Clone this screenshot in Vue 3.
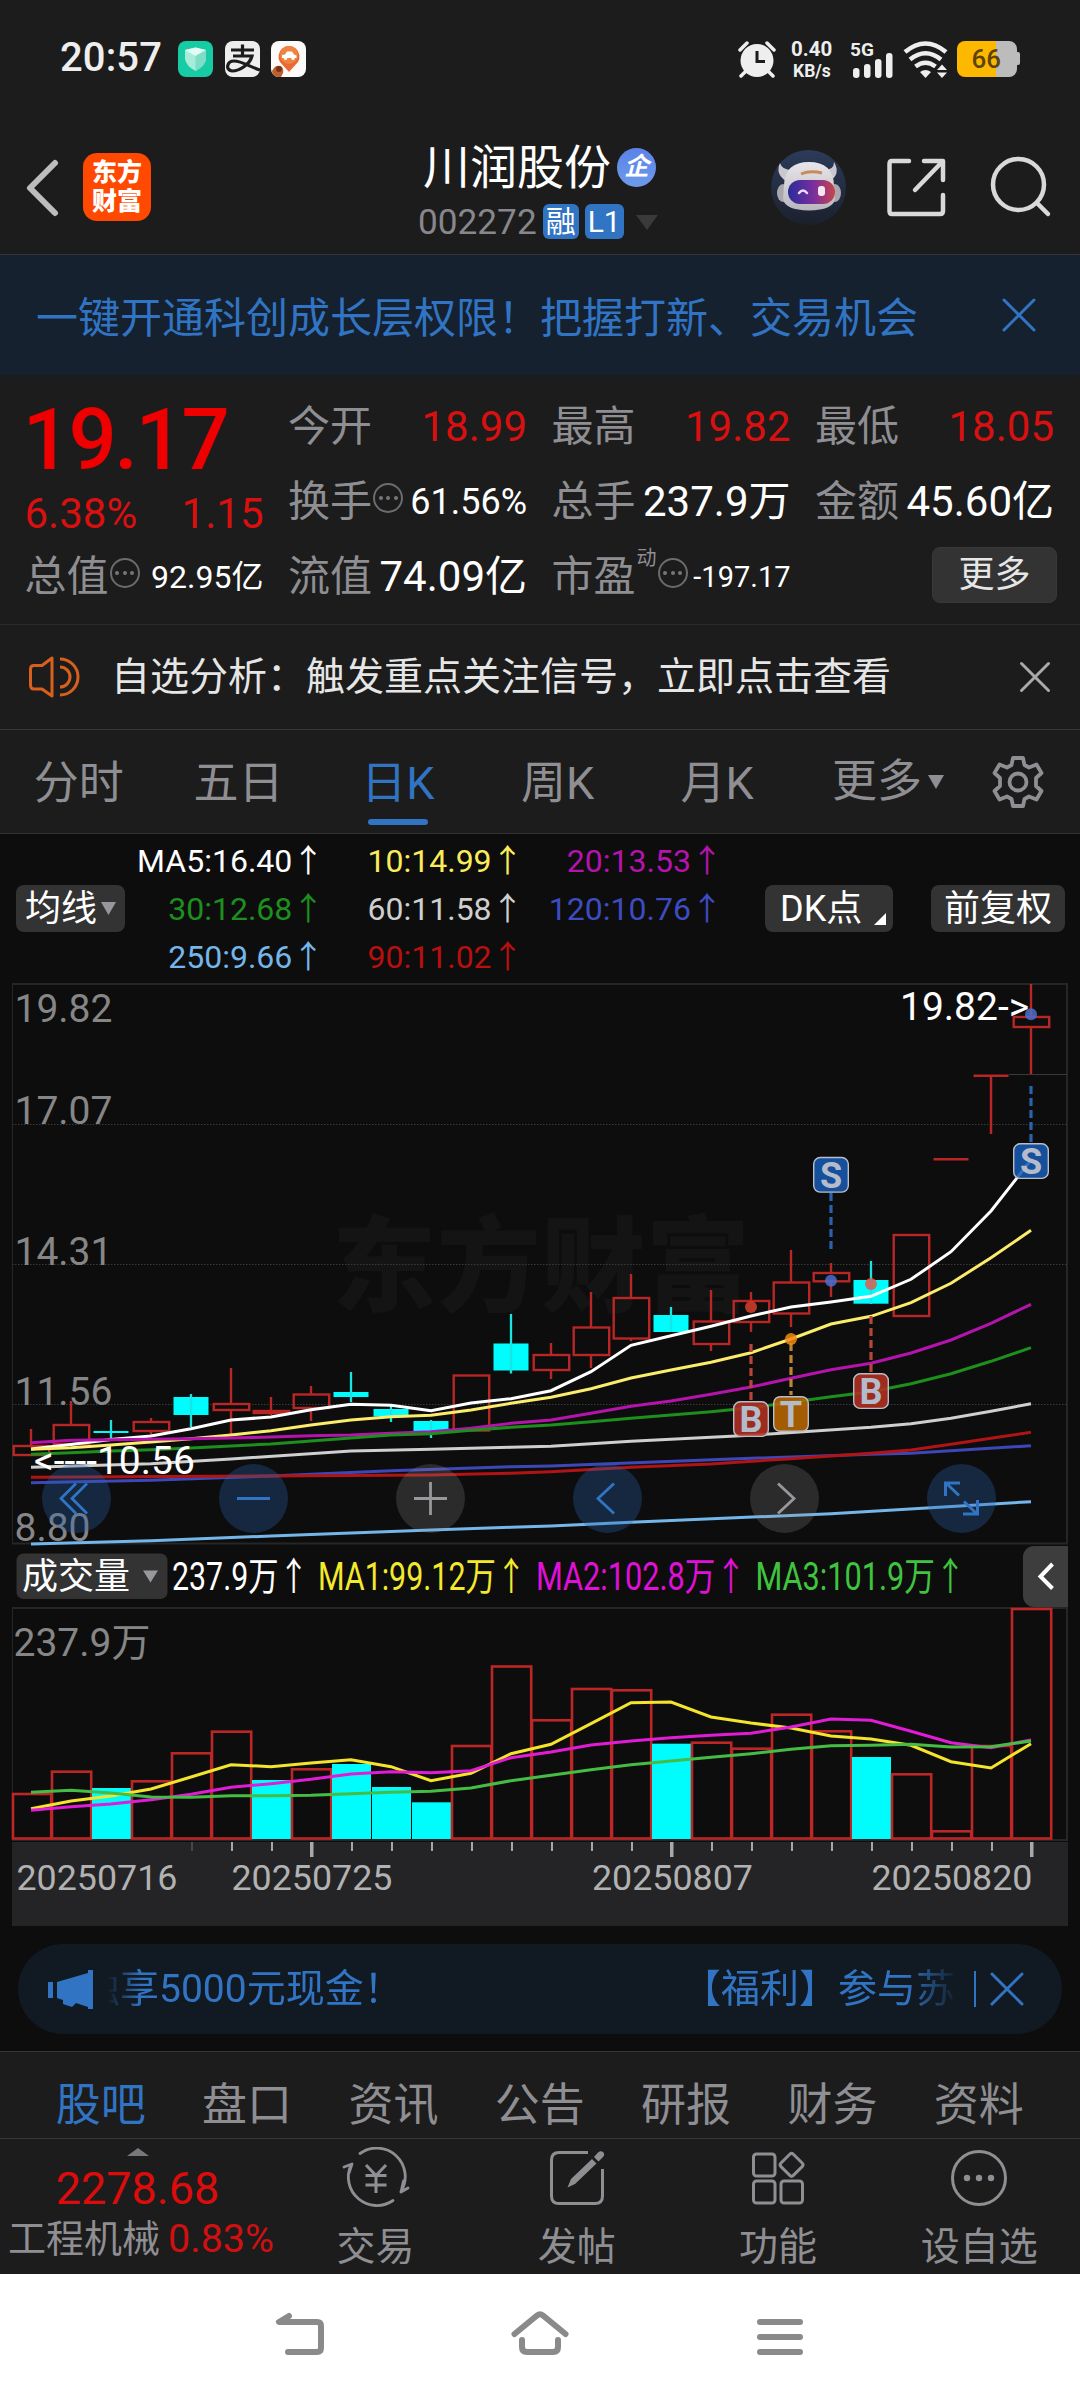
<script setup>
const ma = [
  [['MA5:16.40', '#ffffff'], ['10:14.99', '#fbec5b'], ['20:13.53', '#b414ac']],
  [['30:12.68', '#1d8f1d'], ['60:11.58', '#cfcfcf'], ['120:10.76', '#3d4cc0']],
  [['250:9.66', '#74b6ea'], ['90:11.02', '#b80f0f']],
]
const periods = ['分时', '五日', '日K', '周K', '月K']
const sections = ['股吧', '盘口', '资讯', '公告', '研报', '财务', '资料']

const cx = (i) => 31 + 40 * i
// kind, body top, body bottom, wick top, wick bottom
const candles = [
  ['r', 1446, 1455, 1429, 1446], ['r', 1425, 1444, 1401, 1425], ['c', 1431, 1433, 1420, 1438],
  ['r', 1422, 1431, 1418, 1435], ['c', 1397, 1415, 1394, 1427], ['r', 1404, 1410, 1368, 1434],
  ['r', 1411, 1413, 1397, 1415], ['r', 1394.5, 1408, 1386, 1421], ['c', 1392, 1397, 1372, 1402],
  ['c', 1409, 1416.5, 1406, 1422], ['c', 1421, 1431, 1420, 1438], ['r', 1375.5, 1430.5, 1376, 1376],
  ['c', 1343.5, 1370.5, 1314, 1373.5], ['r', 1355, 1370, 1343, 1379], ['r', 1327.5, 1355, 1292, 1368],
  ['r', 1298, 1338.5, 1274, 1341], ['c', 1315, 1332, 1307, 1332], ['r', 1321.5, 1344, 1290, 1351],
  ['r', 1301, 1322, 1292, 1332], ['r', 1282.5, 1313.5, 1250, 1327], ['r', 1273, 1281.3, 1263, 1297],
  ['c', 1280, 1303.7, 1261, 1304], ['r', 1235, 1316, 1235, 1235], ['l', 1159.3, 0, 0, 0],
  ['l', 1075.7, 0, 1076, 1134], ['r', 1017, 1027, 984, 1074],
]
const pts = (ys) => ys.map((y, i) => `${cx(i)},${y}`).join(' ')
const sparse = (ps) => ps.map(([i, y]) => `${cx(i)},${y}`).join(' ')
const lines = [
  { c: '#cfcfcf', p: sparse([[0, 1467.3], [3, 1463.7], [5, 1459], [8, 1451], [10, 1449.3], [12, 1447.3], [13, 1446.3], [15, 1441.3], [18, 1435.3], [21, 1427.3], [22, 1423.7], [23, 1418.3], [24, 1411.3], [25, 1403.7]]) },
  { c: '#3d47b8', p: sparse([[0, 1482.7], [3, 1480.3], [6, 1476], [9, 1470.7], [12, 1466.7], [13, 1466], [18, 1458.3], [21, 1454.3], [22, 1453.3], [25, 1445.7]]) },
  { c: '#b01414', p: sparse([[0, 1477.3], [6, 1476], [10, 1475], [12, 1473.3], [13, 1471.7], [15, 1467.3], [17, 1464], [19, 1458.7], [21, 1453.3], [22, 1450], [23, 1444.3], [24, 1438.3], [25, 1432.3]]) },
  { c: '#74b6ea', p: sparse([[0, 1544], [3, 1540.7], [6, 1536], [10, 1530], [12, 1527.3], [13, 1526], [15, 1522.3], [20, 1513.7], [25, 1501.7]]) },
  { c: '#ffffff', p: pts([1449, 1444.5, 1439.5, 1436, 1428.7, 1420, 1417, 1409.7, 1404.3, 1405.3, 1410.7, 1403, 1398.7, 1390.7, 1371.7, 1345.3, 1335.7, 1326.3, 1316, 1307, 1302, 1296.3, 1279.3, 1251.7, 1211, 1160]) },
  { c: '#fbec6b', p: pts([1449.3, 1447.7, 1445, 1442, 1438.7, 1435, 1430.7, 1425, 1420, 1416.7, 1415.3, 1410, 1403.3, 1397.3, 1388.7, 1378, 1370, 1362.3, 1352.7, 1339, 1324, 1316.3, 1302.7, 1283.3, 1257.7, 1230.3]) },
  { c: '#b414ac', p: pts([1442.7, 1440.3, 1439.7, 1439.3, 1438.7, 1438, 1437, 1435.7, 1435, 1433.3, 1431.7, 1428.3, 1423.3, 1420, 1413.3, 1406.3, 1401, 1394.3, 1387, 1378.3, 1369.7, 1363.3, 1353, 1340, 1323.3, 1304.3]) },
  { c: '#1d8f1d', p: pts([1454.3, 1452.7, 1451, 1449.7, 1448, 1446, 1444, 1441, 1438, 1435, 1433.7, 1430.3, 1427.3, 1425, 1421.7, 1418.3, 1415, 1411.7, 1407.7, 1402.3, 1396.7, 1391.7, 1383.7, 1373.7, 1361.3, 1347.7]) },
]
const marks = [
  { t: 'S', i: 20, y: 1157, a: 1193, b: 1250, dot: 1280.7, bg: '#1859b0', line: '#2a62ad', dc: '#4a6fd0' },
  { t: 'S', i: 25, y: 1143.3, a: 1086, b: 1142, dot: 1014.3, bg: '#1859b0', line: '#2a62ad', dc: '#4a6fd0' },
  { t: 'B', i: 18, y: 1401.3, a: 1344, b: 1400, dot: 1307, bg: '#b23021', line: '#b84638', dc: '#d8402c' },
  { t: 'T', i: 19, y: 1396.2, a: 1343, b: 1395, dot: 1339, bg: '#b86800', line: '#c08530', dc: '#f08a10' },
  { t: 'B', i: 21, y: 1373.3, a: 1316, b: 1372, dot: 1284, bg: '#b23021', line: '#b84638', dc: '#e05c4c' },
]
const prices = [['19.82', 1022], ['17.07', 1124], ['14.31', 1264.7], ['11.56', 1404.7], ['8.80', 1540.5]]
const volumes = [
  ['r', 1794], ['r', 1771.7], ['c', 1788], ['r', 1781.3], ['r', 1753.3], ['r', 1731.7], ['c', 1780], ['r', 1769.3],
  ['c', 1764], ['c', 1787], ['c', 1802.3], ['r', 1746], ['r', 1666.5], ['r', 1720.3], ['r', 1689], ['r', 1690.3],
  ['c', 1743.7], ['r', 1742.7], ['r', 1748.7], ['r', 1714.7], ['r', 1731.3], ['c', 1757], ['r', 1774.3], ['r', 1831.3],
  ['r', 1746], ['r', 1609],
]
const volLines = [
  { c: '#f5e42c', p: pts([1808.7, 1801, 1796, 1789, 1777, 1764.7, 1766.7, 1763, 1759.7, 1766.7, 1780.7, 1773.3, 1753.7, 1744.3, 1723.7, 1702.7, 1702, 1717, 1723, 1728, 1736, 1739, 1745.3, 1761.7, 1768, 1743.7]) },
  { c: '#e01cd4', p: pts([1810.3, 1806.7, 1804, 1799.7, 1794.3, 1787.3, 1783.7, 1779.3, 1774, 1771.7, 1772.7, 1770.7, 1757.7, 1752, 1745, 1741, 1737.7, 1735.3, 1733.3, 1727, 1719, 1720.3, 1731.3, 1742.7, 1747.7, 1740]) },
  { c: '#45bd45', p: pts([1792.3, 1790.3, 1793, 1797, 1797.3, 1795.7, 1795.7, 1795.3, 1793.7, 1792.3, 1791.3, 1788, 1780.7, 1775.3, 1769.7, 1764.7, 1761, 1757.3, 1753.7, 1749.3, 1745.7, 1745.3, 1744.3, 1747, 1746.7, 1741]) },
]
const volTexts = [
  ['237.9万↑', 172, 0.788, '#ffffff'], ['MA1:99.12万↑', 318, 0.79, '#f5e92c'],
  ['MA2:102.8万↑', 536, 0.797, '#e010d8'], ['MA3:101.9万↑', 755.5, 0.797, '#40c440'],
]
const ticks = Array.from({ length: 22 }, (_, k) => ({ x: 192 + 40 * k, big: [3, 12, 21].includes(k), dim: k === 0 }))
const dates = [['20250716', 16.5], ['20250725', 231.5], ['20250807', 592], ['20250820', 871.5]]
const buttons = [[76.5, 1], [253.5, 1], [430.5, 0], [607.5, 1], [784.5, 0], [961.5, 1]]
</script>

<template>
  <div class="app">
    <div class="status">
      <span class="time">20:57</span>
      <svg class="s-apps" width="128" height="36" viewBox="0 0 128 36">
        <rect width="35" height="36" rx="8" fill="#17cba5" />
        <path d="M7 9 L17.500 6.500 L28 9 V18 Q27 25 17.500 30 Q8 25 7 18 Z" fill="#a5ecda" />
        <path d="M7 9 L17.500 6.500 L28 9 L17.500 15 Z" fill="#e2fbf5" />
        <path d="M17.500 15 L28 9 V18 Q27 25 17.500 30 Z" fill="#7fdcc6" />
        <rect x="47" width="35" height="36" rx="8" fill="#eeeeee" />
        <path d="M53 9 H76 M64.500 3.500 V15 M55 15 H74 C72 23 62 30 54 30 C47 29 49 20 56 20 C64 20 72 26 82 29" fill="none" stroke="#1c1c1c" stroke-width="3.200" />
        <rect x="93" width="35" height="36" rx="8" fill="#fdfafa" />
        <path d="M111 31 L102 21 A10.500 10.500 0 1 1 120 21 Z" fill="#ea6a35" />
        <circle cx="111" cy="14" r="9" fill="#ef8340" />
        <path d="M104 17 V14 L107 13.500 L109 10.500 H114 L116 13.500 L118.500 14.500 V17 Z" fill="#fff" />
        <circle cx="107.500" cy="17.500" r="1.600" fill="#fff" /><circle cx="115" cy="17.500" r="1.600" fill="#fff" />
        <path d="M94 30 Q98 22 104 26 Q107 30 103 36 H100 Q94 35 94 30 Z" fill="#b9622f" />
        <circle cx="101" cy="28" r="3" fill="#7c3315" />
      </svg>
      <svg class="s-right" width="284" height="60" viewBox="738 28 284 60">
        <circle cx="757" cy="59.500" r="16.500" fill="#eee" />
        <path d="M740 49 L747 42 M774 49 L767 42 M745 71 L741 75 M769 71 L773 75" stroke="#eee" stroke-width="3.500" stroke-linecap="round" />
        <path d="M757 50 V60.500 H765" fill="none" stroke="#1c1c1c" stroke-width="3" />
        <text x="791" y="55" font-size="20.500" class="b">0.40</text>
        <text x="793" y="76" font-size="17.500" class="b">KB/s</text>
        <text x="850" y="55" font-size="19" class="b">5G</text>
        <g fill="#eee">
          <rect x="853" y="67" width="6.500" height="10" rx="3" /><rect x="864" y="63" width="6.500" height="14" rx="3" />
          <rect x="875" y="58" width="6.500" height="19" rx="3" /><rect x="886" y="52" width="6.500" height="25" rx="3" />
          <path d="M920 71 Q925.500 67 931 71 L925.500 77 Z" />
          <path d="M937 69 L942 63.500 L947 69 Z M937 71.500 H947 L942 77 Z" />
        </g>
        <path d="M905 51 Q925.500 34 946 51 M910 58.500 Q925.500 46 941 58.500 M915.500 65.500 Q925.500 58 935.500 65.500" fill="none" stroke="#eee" stroke-width="4.500" />
        <path d="M1012 40 H996 V76 H1009 A8 8 0 0 0 1017 68 V64 H1018 Q1020 64 1020 62 V53 Q1020 51 1018 51 H1017 V48 A8 8 0 0 0 1009 40 Z" fill="#bcbcbc" />
        <path d="M996 40 V76 H965 A8 8 0 0 1 957 68 V48 A8 8 0 0 1 965 40 Z" fill="#fdb900" />
        <text x="971.500" y="66.700" font-size="26" class="bat">66</text>
      </svg>
    </div>

    <header class="header">
      <svg class="back" width="40" height="60" viewBox="0 0 40 60"><path d="M33 5 L8 30 L33 55" fill="none" stroke="#bdbdbd" stroke-width="6" stroke-linecap="round" stroke-linejoin="round" /></svg>
      <div class="logo"><span>东方</span><span>财富</span></div>
      <div class="title">
        <div class="name">川润股份<i class="qi">企</i></div>
        <div class="code">002272<span class="tag rong">融</span><span class="tag l1">L1</span><svg width="24" height="16" viewBox="0 0 24 16"><path d="M1 1 H23 L12 16 Z" fill="#3a3a3a" /></svg></div>
      </div>
      <svg class="h-icons" width="290" height="80" viewBox="768 147 290 80">
        <defs>
          <linearGradient id="bot" x1="0" y1="0" x2="0" y2="1"><stop offset="0" stop-color="#2c3b5a" /><stop offset="1" stop-color="#1b202c" /></linearGradient>
          <linearGradient id="visor"><stop offset="0" stop-color="#2a2c9a" /><stop offset=".55" stop-color="#7a2f9c" /><stop offset="1" stop-color="#c8444c" /></linearGradient>
          <linearGradient id="helm" x1="0" y1="0" x2="0" y2="1"><stop offset="0" stop-color="#e8e6ea" /><stop offset="1" stop-color="#b9b6be" /></linearGradient>
        </defs>
        <circle cx="808.500" cy="187.500" r="37.500" fill="url(#bot)" />
        <path d="M780 163 Q775 174 786 181 L792 170 Q782 170 780 163 Z M834 162 Q841 174 830 181 L824 170 Q834 170 834 162 Z" fill="#c9c7cf" />
        <ellipse cx="783" cy="193" rx="6" ry="9" fill="#a9a6ae" /><ellipse cx="835" cy="193" rx="6" ry="9" fill="#a9a6ae" />
        <path d="M784 185 Q785 162 809 162 Q833 162 834 185 L835 199 Q833 210 809 210.500 Q785 210 783 199 Z" fill="url(#helm)" />
        <path d="M801 174 Q810 170 822 173" fill="none" stroke="#c98a5c" stroke-width="3" />
        <rect x="788" y="180" width="47" height="24" rx="12" fill="url(#visor)" />
        <path d="M799 193 Q803 188 807 193" fill="none" stroke="#e6dcff" stroke-width="2.500" stroke-linecap="round" />
        <rect x="818" y="186" width="7" height="10" rx="3" fill="#f4e6f2" />
        <g fill="none" stroke="#d9d9d9" stroke-width="4.500" stroke-linecap="round" stroke-linejoin="round">
          <path d="M909 161 H892 Q889.500 161 889.500 164 V211 Q889.500 214 892 214 H940 Q943 214 943 211 V195" />
          <path d="M924 161 H943 V180 M942 162 L915 190" />
          <circle cx="1018.500" cy="184.500" r="25.500" /><path d="M1037 203 L1048 214" />
        </g>
      </svg>
    </header>

    <div class="banner">
      <span>一键开通科创成长层权限！把握打新、交易机会</span>
      <svg width="36" height="36" viewBox="0 0 36 36"><path d="M3 3 L33 33 M33 3 L3 33" stroke="#3174c3" stroke-width="3" stroke-linecap="round" /></svg>
    </div>

    <section class="quote">
      <div class="col first">
        <div class="price">19.17</div>
        <div class="row chg"><b class="up">6.38%</b><b class="up">1.15</b></div>
        <div class="row"><span>总值</span><i class="info"><u></u><u></u><u></u></i><b class="v32">92.95亿</b></div>
      </div>
      <div class="col">
        <div class="row"><span>今开</span><b class="up">18.99</b></div>
        <div class="row"><span>换手</span><i class="info"><u></u><u></u><u></u></i><b class="v36">61.56%</b></div>
        <div class="row"><span>流值</span><b>74.09亿</b></div>
      </div>
      <div class="col">
        <div class="row"><span>最高</span><b class="up">19.82</b></div>
        <div class="row"><span>总手</span><b>237.9万</b></div>
        <div class="row"><span>市盈</span><em>动</em><i class="info"><u></u><u></u><u></u></i><b class="v29">-197.17</b></div>
      </div>
      <div class="col">
        <div class="row"><span>最低</span><b class="up">18.05</b></div>
        <div class="row"><span>金额</span><b>45.60亿</b></div>
        <div class="row"><button class="more">更多</button></div>
      </div>
    </section>

    <div class="notice">
      <svg width="54" height="44" viewBox="28 654 54 44"><g fill="none" stroke="#d8601c" stroke-width="3" stroke-linejoin="round"><path d="M53 657 V695 L43 688 H35 Q31.500 688 31.500 684 V668 Q31.500 664.500 35 664.500 H43 Z" /><path d="M61 666 A10 10 0 0 1 61 686 M61 658 A18 18 0 0 1 61 694" /></g></svg>
      <span>自选分析：触发重点关注信号，立即点击查看</span>
      <svg class="nx" width="32" height="32" viewBox="0 0 32 32"><path d="M2.500 2.500 L29.500 29.500 M29.500 2.500 L2.500 29.500" stroke="#aaaaaa" stroke-width="3" stroke-linecap="round" /></svg>
    </div>

    <nav class="periods">
      <span v-for="p in periods" :key="p" :class="{ on: p === '日K' }">{{ p }}</span>
      <span class="pmore">更多<svg width="16" height="14" viewBox="0 0 16 14"><path d="M0 0 H16 L8 14 Z" fill="#8e8e93" /></svg></span>
      <svg class="gear" width="56" height="56" viewBox="-28 -28 56 56">
        <g fill="none" stroke="#8e8e93" stroke-width="3.800" stroke-linejoin="round">
          <path d="M-5 -24 H5 L6.500 -17 L11 -14.500 L18.500 -17.500 L23.500 -9 L18 -4 V4 L23.500 9 L18.500 17.500 L11 14.500 L6.500 17 L5 24 H-5 L-6.500 17 L-11 14.500 L-18.500 17.500 L-23.500 9 L-18 4 V-4 L-23.500 -9 L-18.500 -17.500 L-11 -14.500 L-6.500 -17 Z" />
          <circle r="8.500" />
        </g>
      </svg>
    </nav>

    <div class="ma">
      <div class="chip jx">均线<svg width="15" height="13" viewBox="0 0 15 13"><path d="M0 0 H15 L7.500 13 Z" fill="#98989c" /></svg></div>
      <div class="ma-rows">
        <div v-for="(r, n) in ma" :key="n" class="ma-row"><span v-for="c in r" :key="c[0]" :style="{ color: c[1] }">{{ c[0] }}<s>↑</s></span></div>
      </div>
      <div class="chip dk">DK点<svg width="12" height="12" viewBox="0 0 12 12"><path d="M12 0 V12 H0 Z" fill="#fff" /></svg></div>
      <div class="chip fq">前复权</div>
    </div>

    <svg class="chart" width="1080" height="946" viewBox="0 980 1080 946">
      <text x="332" y="1304" font-size="104" textLength="418" class="wm">东方财富</text>
      <g fill="none" stroke="#262626" stroke-width="2">
        <path d="M12 984 H1067 V1543.500 H12" stroke-width="2" /><path d="M12.500 984 V1543.500" stroke-width="1" />
        <path d="M12 1608 H1067 V1840 H12" /><path d="M12.500 1608 V1840" stroke-width="1" />
      </g>
      <path d="M12 1124.500 H1067 M12 1264.500 H1067 M12 1404.500 H1067" stroke="#3a3a3a" stroke-dasharray="1.500 1.500" />
      <path d="M1009 1074.500 H1067" stroke="#3a3a3a" />
      <text v-for="p in prices" :key="p[0]" x="14.500" :y="p[1]" font-size="39" fill="#868686">{{ p[0] }}</text>

      <g v-for="(k, i) in candles" :key="'k' + i">
        <template v-if="k[0] === 'c'">
          <rect :x="cx(i) - 17.500" :y="k[1]" width="35" :height="k[2] - k[1]" fill="#00fdfd" />
          <path :d="`M${cx(i)} ${k[3]} V${k[4]}`" stroke="#18e4e4" stroke-width="2.300" />
        </template>
        <template v-else-if="k[0] === 'l'">
          <path :d="`M${cx(i) - 17.500} ${k[1]} h35 M${cx(i)} ${k[3] || k[1]} V${k[4] || k[1]}`" stroke="#b82626" stroke-width="2.500" />
        </template>
        <template v-else>
          <rect :x="cx(i) - 17.300" :y="k[1]" width="35.500" :height="k[2] - k[1]" fill="none" stroke="#b82626" stroke-width="2.400" />
          <path :d="`M${cx(i)} ${k[3]} V${k[1]} M${cx(i)} ${k[2]} V${Math.max(k[4], k[2])}`" stroke="#b82626" stroke-width="2.400" />
        </template>
      </g>
      <polyline v-for="(l, n) in lines" :key="'l' + n" :points="l.p" fill="none" :stroke="l.c" stroke-width="3" />

      <g v-for="(m, n) in marks" :key="'m' + n">
        <path :d="`M${cx(m.i)} ${m.a} V${m.b}`" :stroke="m.line" stroke-width="3.200" stroke-dasharray="8 4" />
        <circle :cx="cx(m.i)" :cy="m.dot" r="6" :fill="m.dc" fill-opacity=".85" />
        <rect :x="cx(m.i) - 17.300" :y="m.y + 0.500" width="34.600" height="34.600" rx="6.500" :fill="m.bg" stroke="#b9bfca" stroke-width="1.400" fill-opacity=".88" />
        <text :x="cx(m.i)" :y="m.y + 30.500" font-size="36" text-anchor="middle" class="mk">{{ m.t }}</text>
      </g>
      <text x="900" y="1020" font-size="39" fill="#fff">19.82-&gt;</text>
      <text x="34" y="1474" font-size="39" fill="#fff">&lt;----10.56</text>

      <circle v-for="b in buttons" :key="b[0]" :cx="b[0]" cy="1498.500" r="34.500" :fill="b[1] ? 'rgba(40,100,175,.32)' : 'rgba(150,150,150,.22)'" />
      <g fill="none" stroke="#3174c3" stroke-width="2.800">
        <path d="M76 1483.500 L61 1498.500 L76 1513.500 M87 1483.500 L72 1498.500 L87 1513.500 M237 1498.500 H270" />
        <path d="M614 1483.500 L598 1498.500 L614 1513.500" />
        <path d="M945.500 1496 V1483 H960 M947 1484 L959 1495.500 M963 1514 H977.500 V1500 M976 1513 L964 1501.500" stroke-width="3" />
      </g>
      <path d="M414 1498.500 H447 M430.500 1482 V1515 M778 1483.500 L794 1498.500 L778 1513.500" fill="none" stroke="#98989c" stroke-width="2.800" />

      <rect x="16.500" y="1553.500" width="151" height="45.500" rx="7" fill="#333334" />
      <text x="22" y="1589" font-size="36" fill="#fff">成交量</text>
      <path d="M143 1570.500 H158 L150.500 1582.500 Z" fill="#98989c" />
      <text v-for="v in volTexts" :key="v[0]" :transform="`translate(${v[1]} 1590) scale(${v[2]} 1)`" font-size="38.500" :fill="v[3]">{{ v[0] }}</text>
      <path d="M1068 1546 H1034 A11 11 0 0 0 1023 1557 V1596 A11 11 0 0 0 1034 1607 H1068 Z" fill="#3d3d3d" />
      <path d="M1052.500 1564 L1040.500 1576.500 L1052.500 1588.500" fill="none" stroke="#fff" stroke-width="4" />

      <text x="13.500" y="1656" font-size="39" fill="#868686">237.9万</text>
      <g v-for="(v, i) in volumes" :key="'v' + i">
        <rect v-if="v[0] === 'c'" :x="cx(i) - 19" :y="v[1]" width="39" :height="1839 - v[1]" fill="#00fdfd" />
        <rect v-else :x="cx(i) - (i ? 19 : 18)" :y="v[1]" :width="i ? 39.200 : 38.200" :height="1838.500 - v[1]" fill="none" stroke="#bc2626" stroke-width="2.600" />
      </g>
      <polyline v-for="(l, n) in volLines" :key="'w' + n" :points="l.p" fill="none" :stroke="l.c" stroke-width="3" />
      <rect x="12" y="1842" width="1056" height="84" fill="#242426" />
      <rect v-for="t in ticks" :key="t.x" :x="t.big ? t.x - 2 : t.x - 1" y="1842" :width="t.big ? 3.500 : 2" :height="t.big ? 15 : 9" :fill="t.dim ? '#47474a' : '#a8a8a8'" />
      <text v-for="d in dates" :key="d[0]" :x="d[1]" y="1890" font-size="35.800" fill="#b2b2b2">{{ d[0] }}</text>
    </svg>

    <div class="promo">
      <svg width="46" height="40" viewBox="47 1968 46 40"><path d="M48 1981 H53 V1997 H48 Z M57 1981 L88 1972 V1969 H93 V2008 H88 V2006 L76 2002 L72 2006 L63 2003 V1999 L57 1997 Z" fill="#3174c3" /></svg>
      <div class="marquee"><span>独享5000元现金！</span><span>【福利】参与苏</span></div>
      <i class="bar"></i>
      <svg class="px" width="34" height="34" viewBox="0 0 34 34"><path d="M2 2 L32 32 M32 2 L2 32" stroke="#3174c3" stroke-width="3" stroke-linecap="round" /></svg>
    </div>

    <nav class="sections"><span v-for="s in sections" :key="s" :class="{ on: s === '股吧' }">{{ s }}</span></nav>

    <div class="tools">
      <div class="index">
        <svg width="22" height="8" viewBox="0 0 22 8"><path d="M0 8 L11 0 L22 8 Z" fill="#77777c" /></svg>
        <strong>2278.68</strong>
        <div>工程机械<b>0.83%</b></div>
      </div>
      <div class="tool">
        <svg width="68" height="62" viewBox="-34 -31 68 62"><g fill="none" stroke="#8e8e93" stroke-width="2.800" stroke-linejoin="round" stroke-linecap="round"><path d="M-16 -24.500 A28.500 28.500 0 0 1 25 13.500 M25 14 L32 10 M25 14 L27.500 3" /><path d="M17 22.500 A28.500 28.500 0 0 1 -25 -13 M-32 -11 L-24 -14 L-27 -5" /></g><path d="M-10 -13 L0 -2.500 L10 -13 M-10.500 -2.500 H10.500 M-10.500 7 H10.500 M0 -2.500 V15" fill="none" stroke="#8e8e93" stroke-width="3" /></svg>
        <span>交易</span>
      </div>
      <div class="tool">
        <svg width="68" height="62" viewBox="-34 -31 68 62"><path d="M11 -25.500 H-18 Q-25.500 -25.500 -25.500 -18 V18 Q-25.500 25.500 -18 25.500 H18 Q25.500 25.500 25.500 18 V-9" fill="none" stroke="#8e8e93" stroke-width="3" /><path d="M-9.500 9.500 L-6 1 L15 -19 L19.500 -14.500 L-2 6 Z M17 -21 L21 -25.500 Q24 -28 26.500 -25.500 Q28 -23 26 -21 L21.500 -16.500 Z" fill="#8e8e93" /></svg>
        <span>发帖</span>
      </div>
      <div class="tool">
        <svg width="68" height="62" viewBox="-34 -31 68 62"><g fill="none" stroke="#8e8e93" stroke-width="3"><rect x="-24.500" y="-24" width="21.500" height="22" rx="3" /><rect x="-24.500" y="3" width="21.500" height="22" rx="3" /><rect x="3" y="3" width="21.500" height="22" rx="3" /><rect x="4.800" y="-22" width="17.500" height="17.500" rx="2.500" transform="rotate(45 13.500 -13.200)" /></g></svg>
        <span>功能</span>
      </div>
      <div class="tool">
        <svg width="68" height="62" viewBox="-34 -31 68 62"><circle r="26.500" fill="none" stroke="#8e8e93" stroke-width="3" /><g fill="#8e8e93"><circle cx="-12" r="3.200" /><circle r="3.200" /><circle cx="12" r="3.200" /></g></svg>
        <span>设自选</span>
      </div>
    </div>

    <svg class="sysnav" width="1080" height="126" viewBox="0 2274 1080 126">
      <g fill="none" stroke="#8a8a8a" stroke-width="6" stroke-linecap="round" stroke-linejoin="round">
        <path d="M289 2316 L279 2322 H317 Q321 2322 321 2326 V2348 Q321 2352 317 2352 H288" />
        <path d="M514.500 2334 L537 2315.500 Q540 2313 543 2315.500 L565.500 2334" />
        <path d="M522 2340 V2347 Q522 2352 527 2352 H553 Q558 2352 558 2347 V2340" />
        <path d="M760 2322 H800 M760 2337 H800 M760 2352 H800" />
      </g>
    </svg>
  </div>
</template>

<style>
body { background: #0d0d0d; }
</style>

<style scoped>
.app { width: 1080px; height: 2400px; overflow: hidden; background: #0d0d0d; font-family: Roboto, "Noto Sans CJK SC", sans-serif; color: #fff; font-weight: 400; }
.app * { box-sizing: border-box; }
svg { display: block; flex: none; }
i, em { font-style: normal; }
s { text-decoration: none; }
.app b { font-weight: 400; }

.status { height: 117px; display: flex; align-items: center; padding: 0 58px 0 60px; background: #1c1c1c; }
.time { font-size: 40px; line-height: 48px; margin-top: -2px; font-weight: 500; color: #eee; width: 118px; letter-spacing: .1px; }
.s-right { margin-left: auto; }
.s-right .b { font-weight: 700; fill: #eee; }
.s-right .bat { font-weight: 500; fill: #5e4308; }

.header { height: 138px; display: flex; align-items: center; background: #1c1c1c; border-bottom: 1px solid #363636; }
.back { margin: 4px 0 0 22px; }
.logo { width: 68px; height: 68px; margin: 3px 0 0 21px; background: #ff4800; border-radius: 14px; display: flex; flex-direction: column; align-items: center; justify-content: center; font-weight: 900; font-size: 25px; line-height: 29.5px; }
.title { margin: 14px 0 0 267px; width: 249px; }
.name { display: flex; align-items: center; font-size: 47px; line-height: 54px; padding-left: 5px; white-space: nowrap; }
.qi { width: 39px; height: 39px; margin: 0 0 0 6px; border-radius: 50%; background: linear-gradient(#5c82e8, #6d9bea); font-size: 25px; line-height: 38px; font-weight: 700; text-align: center; font-style: italic; }
.code { display: flex; align-items: center; font-size: 35.2px; line-height: 46px; margin-top: 4px; color: #87878c; height: 46px; }
.tag { height: 35px; border-radius: 6px; background: #3174c3; color: #fff; font-size: 30px; line-height: 35px; text-align: center; }
.rong { width: 36px; margin-left: 6px; }
.l1 { width: 39px; margin: 0 11px 0 6px; }
.h-icons { margin: 3px 0 0 101px; }

.banner { height: 120px; display: flex; align-items: center; justify-content: space-between; padding: 0 43px 0 36px; background: #15212f; color: #3174c3; font-size: 42px; line-height: 60px; }
.banner span { padding-top: 7px; white-space: nowrap; }

.quote { height: 250px; display: flex; gap: 24.5px; padding: 14px 25px 0 24.5px; background: #1c1c1c; border-bottom: 1px solid #2a2a2a; font-size: 42px; }
.col { width: 239px; flex: none; }
.row { height: 75px; display: flex; align-items: center; line-height: 50px; color: #8e8e93; white-space: nowrap; }
.row b { margin-left: auto; color: #fff; }
.row b.up { color: #d81010; }
.row .v32 { font-size: 32px; }
.row .v36 { font-size: 36px; }
.row .v29 { font-size: 29px; }
.row em { font-size: 20px; line-height: 24px; align-self: flex-start; margin: 7px 0 0 1px; }
.info { width: 30px; height: 30px; margin: -8px 0 0 1px; border: 2px solid #6c6c70; border-radius: 50%; display: flex; align-items: center; justify-content: center; gap: 3.5px; }
.info u { width: 4px; height: 4px; border-radius: 50%; background: #77777b; }
.price { height: 101px; line-height: 103px; margin-left: -2px; font-size: 85px; font-weight: 500; color: #ee0000; letter-spacing: -2.4px; }
.chg { height: 48px; justify-content: space-between; }
.chg b:first-child { margin-left: 0; }
.row.chg + .row { margin-top: 1px; }
.more { margin: -4px -3px 0 auto; width: 125px; height: 56px; border: 1px solid #383838; border-radius: 8px; background: #333334; color: #e6e6e6; font: 36px/50px Roboto, "Noto Sans CJK SC", sans-serif; padding: 0; }

.notice { height: 105px; display: flex; align-items: center; padding: 0 29px 0 27px; background: #1c1c1c; border-bottom: 1px solid #363636; color: #e6e6e6; font-size: 39px; line-height: 50px; white-space: nowrap; }
.notice > svg { margin-top: -1px; }
.notice span { margin-left: 30px; }
.notice .nx { margin-left: auto; }

.periods { height: 104px; display: flex; background: #1c1c1c; border-bottom: 1px solid #333; font-size: 45px; line-height: 107px; color: #8e8e93; }
.periods > span { width: 159.6px; flex: none; text-align: center; position: relative; left: -1px; }
.periods .on { color: #3174c3; }
.periods .on::after { content: ""; position: absolute; left: 50px; bottom: 8px; width: 60px; height: 6px; border-radius: 3px; background: #3174c3; }
.periods .pmore { display: flex; align-items: center; padding-left: 35px; width: 192.5px; }
.pmore svg { margin-left: 6px; }
.gear { margin-top: 24px; }

.ma { height: 146px; display: flex; padding: 3px 0 0 16px; font-size: 36px; }
.chip { height: 47px; margin-top: 48px; flex: none; display: flex; align-items: center; border-radius: 8px; background: #333334; line-height: 46px; white-space: nowrap; }
.jx { width: 109px; padding-left: 9px; }
.jx svg { margin-left: 4px; }
.ma-rows { width: 598px; flex: none; }
.ma-row { display: flex; height: 48px; }
.ma-row span { width: 199.3px; text-align: right; font-size: 32px; line-height: 48px; white-space: nowrap; }
.ma-row s { display: inline-block; width: 32px; text-align: center; }
.dk { width: 128px; margin-left: 42px; padding-left: 15px; }
.dk svg { margin: 20px 0 0 12px; }
.fq { width: 134px; margin-left: 38px; padding-left: 13px; }

.chart text { white-space: pre; }
.wm { font-weight: 900; fill: #141414; }
.mk { font-weight: 700; fill: #b4bccb; }

.promo { height: 90px; width: 1044px; margin: 18px 0 17px 18px; padding: 0 38px 0 29px; border-radius: 45px; background: #111a23; display: flex; align-items: center; color: #3174c3; }
.marquee { width: 852px; margin-left: 14px; display: flex; justify-content: space-between; overflow: hidden; font-size: 39px; line-height: 56px; white-space: nowrap; padding-right: 4px; -webkit-mask-image: linear-gradient(90deg, transparent 0, #000 34px, #000 800px, transparent 100%); mask-image: linear-gradient(90deg, transparent 0, #000 34px, #000 800px, transparent 100%); }
.marquee span:first-child { margin-left: -26px; }
.bar { width: 1.5px; height: 36px; margin-left: 15px; background: #3174c3; }
.px { margin-left: auto; }

.sections { height: 88px; padding: 0 28px 0 27.5px; display: flex; background: #1c1c1c; border-top: 1px solid #363636; border-bottom: 1px solid #363636; font-size: 45px; line-height: 107px; color: #8e8e93; }
.sections span { flex: 1; text-align: center; }
.sections .on { color: #3174c3; }

.tools { height: 135px; display: flex; background: #1c1c1c; color: #8e8e93; }
.index { width: 275px; display: flex; flex-direction: column; align-items: center; padding-top: 9px; color: #8e8e93; font-size: 38px; line-height: 48px; white-space: nowrap; }
.index strong { font-weight: 400; font-size: 45px; line-height: 50px; height: 50px; margin-top: 8px; color: #dc0c0c; }
.index div { width: 275px; padding-left: 8px; margin-top: 1px; }
.index b { font-size: 39.5px; color: #d01010; margin-left: 8px; }
.tool { width: 201.2px; display: flex; flex-direction: column; align-items: center; padding-top: 8px; font-size: 39px; line-height: 48px; }
.tool span { margin-top: 14px; }
.sysnav { background: #fff; }
</style>
